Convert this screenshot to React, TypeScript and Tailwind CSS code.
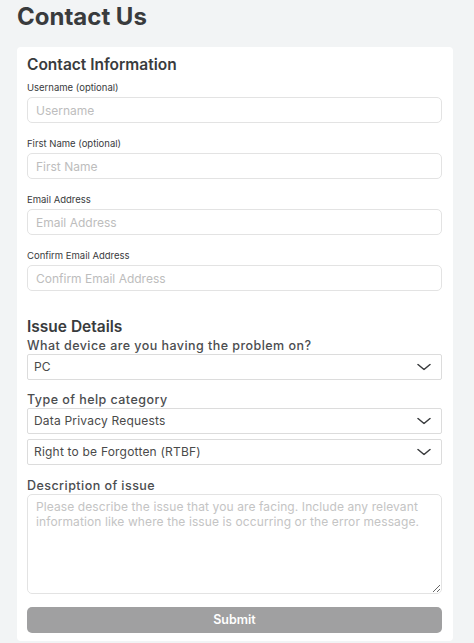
import React from 'react';

const font = { fontFamily: 'Inter, "Liberation Sans", sans-serif' };

function Chevron() {
  return (
    <svg
      width="14"
      height="7"
      viewBox="0 0 14 7"
      fill="none"
      stroke="#393b3d"
      strokeWidth="1.5"
      strokeLinecap="round"
      strokeLinejoin="round"
      className="pointer-events-none absolute right-[11px] top-1/2 -translate-y-1/2"
    >
      <path d="M1 1l6 5 6-5" />
    </svg>
  );
}

function TextField({ label, placeholder }: { label: string; placeholder: string }) {
  return (
    <div className="flex flex-col">
      <label className="text-[9.5px] leading-[12px] text-[#393b3d]">{label}</label>
      <input
        placeholder={placeholder}
        className="mt-[3px] block h-[26px] w-full rounded-[5px] border border-[#e3e3e3] bg-white px-[8px] text-[12px] text-[#393b3d] outline-none placeholder:text-[#bdbdbd]"
      />
    </div>
  );
}

function Select({ value, options }: { value: string; options: string[] }) {
  return (
    <div className="relative">
      <select
        defaultValue={value}
        className="block h-[26px] w-full appearance-none rounded-[2px] border border-[#dcdcdc] bg-white pl-[6px] pr-[30px] text-[12px] tracking-[0.2px] text-[#4a4a4a] outline-none"
      >
        {options.map((o) => (
          <option key={o}>{o}</option>
        ))}
      </select>
      <Chevron />
    </div>
  );
}

const sectionLabel = 'text-[12.5px] font-medium leading-[16px] tracking-[0.45px] text-[#4b4d4f]';

export default function App() {
  return (
    <div className="min-h-screen w-full bg-[#f2f4f5] pl-[17px] pr-[21px]" style={font}>
      <h1 className="pt-[2px] text-[24px] font-bold leading-[29px] text-[#393b3d]">Contact Us</h1>

      <div className="mt-[16px] rounded-[4px] bg-white pb-[8px] pl-[10px] pr-[11px] pt-[8px]">
        <h2 className="text-[15.5px] font-semibold leading-[20px] text-[#393b3d]">
          Contact Information
        </h2>

        <div className="mt-[7px] flex flex-col gap-[15px]">
          <TextField label="Username (optional)" placeholder="Username" />
          <TextField label="First Name (optional)" placeholder="First Name" />
          <TextField label="Email Address" placeholder="Email Address" />
          <TextField label="Confirm Email Address" placeholder="Confirm Email Address" />
        </div>

        <h2 className="mt-[26px] text-[15.5px] font-semibold leading-[20px] text-[#393b3d]">
          Issue Details
        </h2>

        <div className="mt-[1px] flex flex-col">
          <label className={sectionLabel}>What device are you having the problem on?</label>
          <Select value="PC" options={['PC', 'Mac', 'iOS', 'Android', 'Xbox']} />
        </div>

        <div className="mt-[12px] flex flex-col">
          <label className={sectionLabel}>Type of help category</label>
          <Select
            value="Data Privacy Requests"
            options={['Data Privacy Requests', 'Billing and Payments', 'Technical Support']}
          />
          <div className="mt-[5px]">
            <Select
              value="Right to be Forgotten (RTBF)"
              options={['Right to be Forgotten (RTBF)', 'Access My Data']}
            />
          </div>
        </div>

        <div className="mt-[13px] flex flex-col">
          <label className={sectionLabel}>Description of issue</label>
          <textarea
            placeholder="Please describe the issue that you are facing. Include any relevant information like where the issue is occurring or the error message."
            className="block h-[100px] w-full resize-y rounded-[5px] border border-[#e3e3e3] bg-white px-[8px] py-[4px] text-[12px] leading-[15px] tracking-[0.1px] text-[#393b3d] outline-none placeholder:text-[#c4c4c4]"
          />
        </div>

        <button className="mt-[13px] block h-[26px] w-full rounded-[5px] bg-[#a0a0a1] text-[12.5px] font-semibold text-white">
          Submit
        </button>
      </div>
    </div>
  );
}
